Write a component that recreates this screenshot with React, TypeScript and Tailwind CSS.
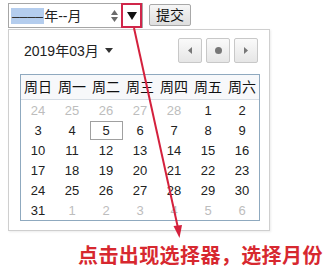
import React from 'react';

const WEEK = ['周日', '周一', '周二', '周三', '周四', '周五', '周六'];

// [day, inCurrentMonth]
const ROWS: [number, boolean][][] = [
  [[24, false], [25, false], [26, false], [27, false], [28, false], [1, true], [2, true]],
  [[3, true], [4, true], [5, true], [6, true], [7, true], [8, true], [9, true]],
  [[10, true], [11, true], [12, true], [13, true], [14, true], [15, true], [16, true]],
  [[17, true], [18, true], [19, true], [20, true], [21, true], [22, true], [23, true]],
  [[24, true], [25, true], [26, true], [27, true], [28, true], [29, true], [30, true]],
  [[31, true], [1, false], [2, false], [3, false], [4, false], [5, false], [6, false]],
];

const CJK = { fontFamily: '"Liberation Sans", "Noto Sans CJK SC", sans-serif' };

const NavButton = ({ children }: { children: React.ReactNode }) => (
  <div className="flex h-[25px] w-[24px] items-center justify-center rounded-[2px] border border-[#c8c8c8] bg-gradient-to-b from-[#fafafa] to-[#e6e6e6]">
    {children}
  </div>
);

const App = () => {
  return (
    <div className="relative h-[273px] w-[335px] overflow-hidden bg-white text-[#222]" style={CJK}>
      {/* input row */}
      <div className="flex items-start pl-[8px] pt-[3px]">
        <div className="flex h-[25px] w-[135px] items-center border border-[#a6a6a6] bg-white">
          <span className="ml-[2px] flex h-[16px] items-center bg-[#b4cdee] px-[1px] text-[14px] leading-none text-[#333]">
            ––––
          </span>
          <span className="text-[14px] leading-none">年--月</span>
          <div className="ml-auto flex h-full items-center">
            <div className="mr-[2px] flex w-[9px] flex-col items-center gap-[2px]">
              <svg width="7" height="5" viewBox="0 0 7 5">
                <path d="M0 5 L3.5 0 L7 5 Z" fill="#6b6b6b" />
              </svg>
              <svg width="7" height="5" viewBox="0 0 7 5">
                <path d="M0 0 L3.5 5 L7 0 Z" fill="#6b6b6b" />
              </svg>
            </div>
            <div className="flex h-[25px] w-[21px] items-center justify-center border-2 border-[#d0264a]">
              <svg width="10" height="8" viewBox="0 0 10 8">
                <path d="M0 0 L10 0 L5 8 Z" fill="#111" />
              </svg>
            </div>
          </div>
        </div>
        <button className="ml-[6px] mt-[1px] flex h-[22px] w-[42px] items-center justify-center rounded-[2px] border border-[#a8a8a8] bg-gradient-to-b from-[#f6f6f6] to-[#dedede] text-[14px] leading-none text-[#111]">
          提交
        </button>
      </div>

      {/* popup panel */}
      <div className="ml-[8px] mt-px h-[202px] w-[262px] border border-[#cfcfcf] bg-white px-[11px] pt-[8px] shadow-[1px_1px_2px_rgba(0,0,0,0.08)]">
        <div className="flex h-[25px] items-center">
          <span className="ml-[4px] text-[14px] leading-none">2019年03月</span>
          <svg className="ml-[6px]" width="8" height="5" viewBox="0 0 8 5">
            <path d="M0 0 L8 0 L4 5 Z" fill="#333" />
          </svg>
          <div className="ml-auto flex gap-[4px]">
            <NavButton>
              <svg width="4" height="7" viewBox="0 0 4 7">
                <path d="M4 0 L0 3.5 L4 7 Z" fill="#777" />
              </svg>
            </NavButton>
            <NavButton>
              <span className="h-[7px] w-[7px] rounded-full bg-[#777]" />
            </NavButton>
            <NavButton>
              <svg width="4" height="7" viewBox="0 0 4 7">
                <path d="M0 0 L4 3.5 L0 7 Z" fill="#777" />
              </svg>
            </NavButton>
          </div>
        </div>

        <div className="mt-[11px] w-[240px] border border-[#8fa9bf]">
          <div className="grid h-[25px] grid-cols-7 border-b border-[#d6dde4] bg-[#f7f8fa]">
            {WEEK.map((w) => (
              <div key={w} className="flex items-center justify-center text-[14px] leading-none text-[#111]">
                {w}
              </div>
            ))}
          </div>
          {ROWS.map((row, ri) => (
            <div key={ri} className="grid h-[20px] grid-cols-7">
              {row.map(([d, cur], ci) => (
                <div key={ci} className="flex items-center justify-center">
                  <span
                    className={`flex items-center justify-center text-[13px] leading-none ${
                      cur ? 'text-[#222]' : 'text-[#bdbdbd]'
                    } ${ri === 1 && ci === 2 ? 'h-[19px] w-[33px] border border-[#a0a0a0]' : ''}`}
                  >
                    {d}
                  </span>
                </div>
              ))}
            </div>
          ))}
        </div>
      </div>

      {/* annotation text */}
      <div
        className="ml-[78px] mt-[14px] text-[20px] font-bold leading-none tracking-[0.4px] text-[#d7282f]"
        style={{ fontFamily: '"Noto Sans CJK SC", sans-serif' }}
      >
        点击出现选择器，选择月份
      </div>

      {/* annotation arrow */}
      <svg className="pointer-events-none absolute left-0 top-0" width="335" height="273" viewBox="0 0 335 273">
        <line x1="134" y1="28" x2="178" y2="228" stroke="#d4213d" strokeWidth="2" />
        <path d="M173.5 226 L179.5 238 L182 225 Z" fill="#d4213d" />
      </svg>
    </div>
  );
};

export default App;
